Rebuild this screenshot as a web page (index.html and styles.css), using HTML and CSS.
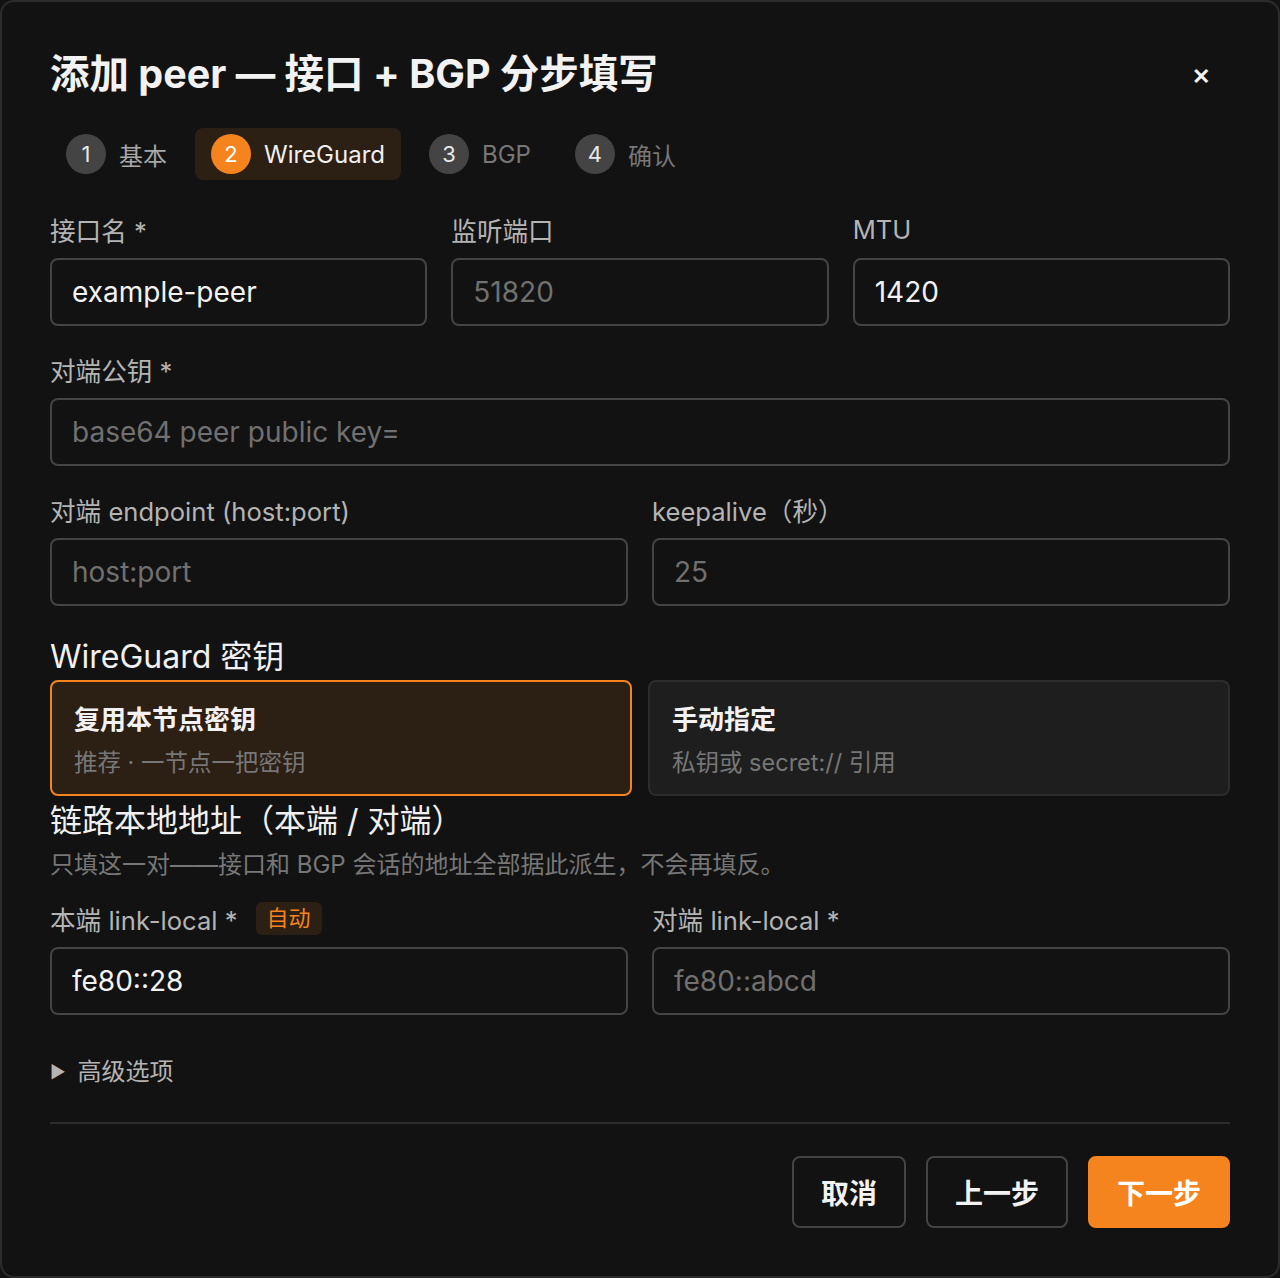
FILE: index.html
```html
<!DOCTYPE html>
<html lang="zh-CN">
<head>
    <meta charset="UTF-8">
    <meta name="viewport" content="width=device-width, initial-scale=1.0">
    <title>添加 peer</title>
    <link rel="stylesheet" href="styles.css">
</head>
<body>
    <div class="dialog">
        <div class="dialog-header">
            <h1>添加 peer — 接口 + BGP 分步填写</h1>
            <button class="close-btn" aria-label="关闭">✕</button>
        </div>

        <div class="steps">
            <div class="step done"><span class="step-num">1</span>基本</div>
            <div class="step active"><span class="step-num">2</span>WireGuard</div>
            <div class="step"><span class="step-num">3</span>BGP</div>
            <div class="step"><span class="step-num">4</span>确认</div>
        </div>

        <div class="row cols-3">
            <div class="field">
                <label>接口名 *</label>
                <input type="text" value="example-peer">
            </div>
            <div class="field">
                <label>监听端口</label>
                <input type="text" placeholder="51820">
            </div>
            <div class="field">
                <label>MTU</label>
                <input type="text" value="1420">
            </div>
        </div>

        <div class="row">
            <div class="field">
                <label>对端公钥 *</label>
                <input type="text" placeholder="base64 peer public key=">
            </div>
        </div>

        <div class="row cols-2">
            <div class="field">
                <label>对端 endpoint (host:port)</label>
                <input type="text" placeholder="host:port">
            </div>
            <div class="field">
                <label>keepalive（秒）</label>
                <input type="text" placeholder="25">
            </div>
        </div>

        <h2 class="section-title">WireGuard 密钥</h2>
        <div class="key-options">
            <div class="key-card selected">
                <div class="key-title">复用本节点密钥</div>
                <div class="key-desc">推荐 · 一节点一把密钥</div>
            </div>
            <div class="key-card">
                <div class="key-title">手动指定</div>
                <div class="key-desc">私钥或 secret:// 引用</div>
            </div>
        </div>

        <h2 class="section-title tight">链路本地地址（本端 / 对端）</h2>
        <p class="hint">只填这一对——接口和 BGP 会话的地址全部据此派生，不会再填反。</p>

        <div class="row cols-2">
            <div class="field">
                <label>本端 link-local * <span class="badge">自动</span></label>
                <input type="text" value="fe80::28">
            </div>
            <div class="field">
                <label>对端 link-local *</label>
                <input type="text" placeholder="fe80::abcd">
            </div>
        </div>

        <div class="advanced"><span class="caret">▶</span>高级选项</div>

        <div class="dialog-footer">
            <button class="btn">取消</button>
            <button class="btn">上一步</button>
            <button class="btn primary">下一步</button>
        </div>
    </div>
</body>
</html>
```

FILE: styles.css
```css
* {
    box-sizing: border-box;
    margin: 0;
    padding: 0;
    font-family: Inter, 'Noto Sans CJK SC', sans-serif;
}

body {
    background-color: #121212;
    color: #ececec;
}

.dialog {
    width: 1280px;
    height: 1278px;
    background: #121212;
    border: 2px solid #2c2c2c;
    border-radius: 14px;
    padding: 34px 48px 48px;
}

.dialog-header {
    display: flex;
    align-items: center;
    justify-content: space-between;
}

h1 {
    font-size: 39.5px;
    font-weight: 700;
    color: #f2f2f2;
    line-height: 76px;
}

.close-btn {
    background: none;
    border: none;
    color: #f2f2f2;
    font-size: 22px;
    font-weight: 700;
    margin-right: 20px;
    margin-top: 4px;
}

.steps {
    display: flex;
    gap: 12px;
    margin-top: 16px;
}

.step {
    display: flex;
    align-items: center;
    gap: 13px;
    height: 52px;
    padding: 0 16px;
    border-radius: 8px;
    font-size: 24px;
    color: #777;
}

.step.done {
    color: #a8a8a8;
}

.step.active {
    background: #2c1f14;
    color: #f0f0f0;
}

.step-num {
    width: 40px;
    height: 40px;
    border-radius: 50%;
    background: #444;
    color: #e8e8e8;
    display: flex;
    align-items: center;
    justify-content: center;
    font-size: 22px;
}

.step.active .step-num {
    background: #f5841f;
    color: #fff;
}

.row {
    display: grid;
    gap: 24px;
    margin-top: 26px;
}

.steps + .row {
    margin-top: 32px;
}

.cols-3 {
    grid-template-columns: 1fr 1fr 1fr;
}

.cols-2 {
    grid-template-columns: 1fr 1fr;
}

.field label {
    display: flex;
    align-items: center;
    gap: 18px;
    height: 34px;
    font-size: 25.6px;
    color: #b4b4b4;
    margin-bottom: 12px;
}

.field input {
    width: 100%;
    height: 68px;
    background: #121212;
    border: 2px solid #444;
    border-radius: 8px;
    padding: 0 20px;
    font-size: 28px;
    color: #f2f2f2;
    outline: none;
}

.field input::placeholder {
    color: #707070;
}

.badge {
    display: inline-block;
    background: #2c1f14;
    color: #f5841f;
    font-size: 22px;
    line-height: 33px;
    padding: 0 11px;
    border-radius: 6px;
}

.section-title {
    font-size: 32px;
    font-weight: 400;
    color: #f0f0f0;
    line-height: 40px;
    margin-top: 31px;
    margin-bottom: 3px;
}

.section-title.tight {
    margin-top: 5px;
    margin-bottom: 0;
}

.key-options {
    display: grid;
    grid-template-columns: 1fr 1fr;
    gap: 16px;
}

.key-card {
    height: 116px;
    border: 2px solid #2c2c2c;
    background: #1e1e1e;
    border-radius: 8px;
    padding: 20px 22px;
}

.key-card.selected {
    border-color: #f5841f;
    background: #2c1f14;
}

.key-title {
    font-size: 26px;
    font-weight: 700;
    color: #f2f2f2;
    line-height: 36px;
}

.key-desc {
    font-size: 23.5px;
    color: #777;
    line-height: 32px;
    margin-top: 9px;
}

.hint {
    font-size: 24px;
    color: #777;
    line-height: 32px;
    margin-top: 8px;
}

.hint + .row {
    margin-top: 20px;
}

.advanced {
    display: flex;
    align-items: center;
    gap: 12px;
    font-size: 24px;
    color: #b4b4b4;
    margin-top: 40px;
    line-height: 34px;
}

.caret {
    font-size: 17px;
    color: #b4b4b4;
}

.dialog-footer {
    display: flex;
    justify-content: flex-end;
    gap: 20px;
    border-top: 2px solid #2c2c2c;
    margin-top: 33px;
    padding-top: 32px;
}

.btn {
    height: 72px;
    padding: 0 27px;
    font-size: 28px;
    font-weight: 700;
    background: #121212;
    color: #f2f2f2;
    border: 2px solid #444;
    border-radius: 8px;
}

.btn.primary {
    background: #f5841f;
    border-color: #f5841f;
    color: #fff;
}
```
